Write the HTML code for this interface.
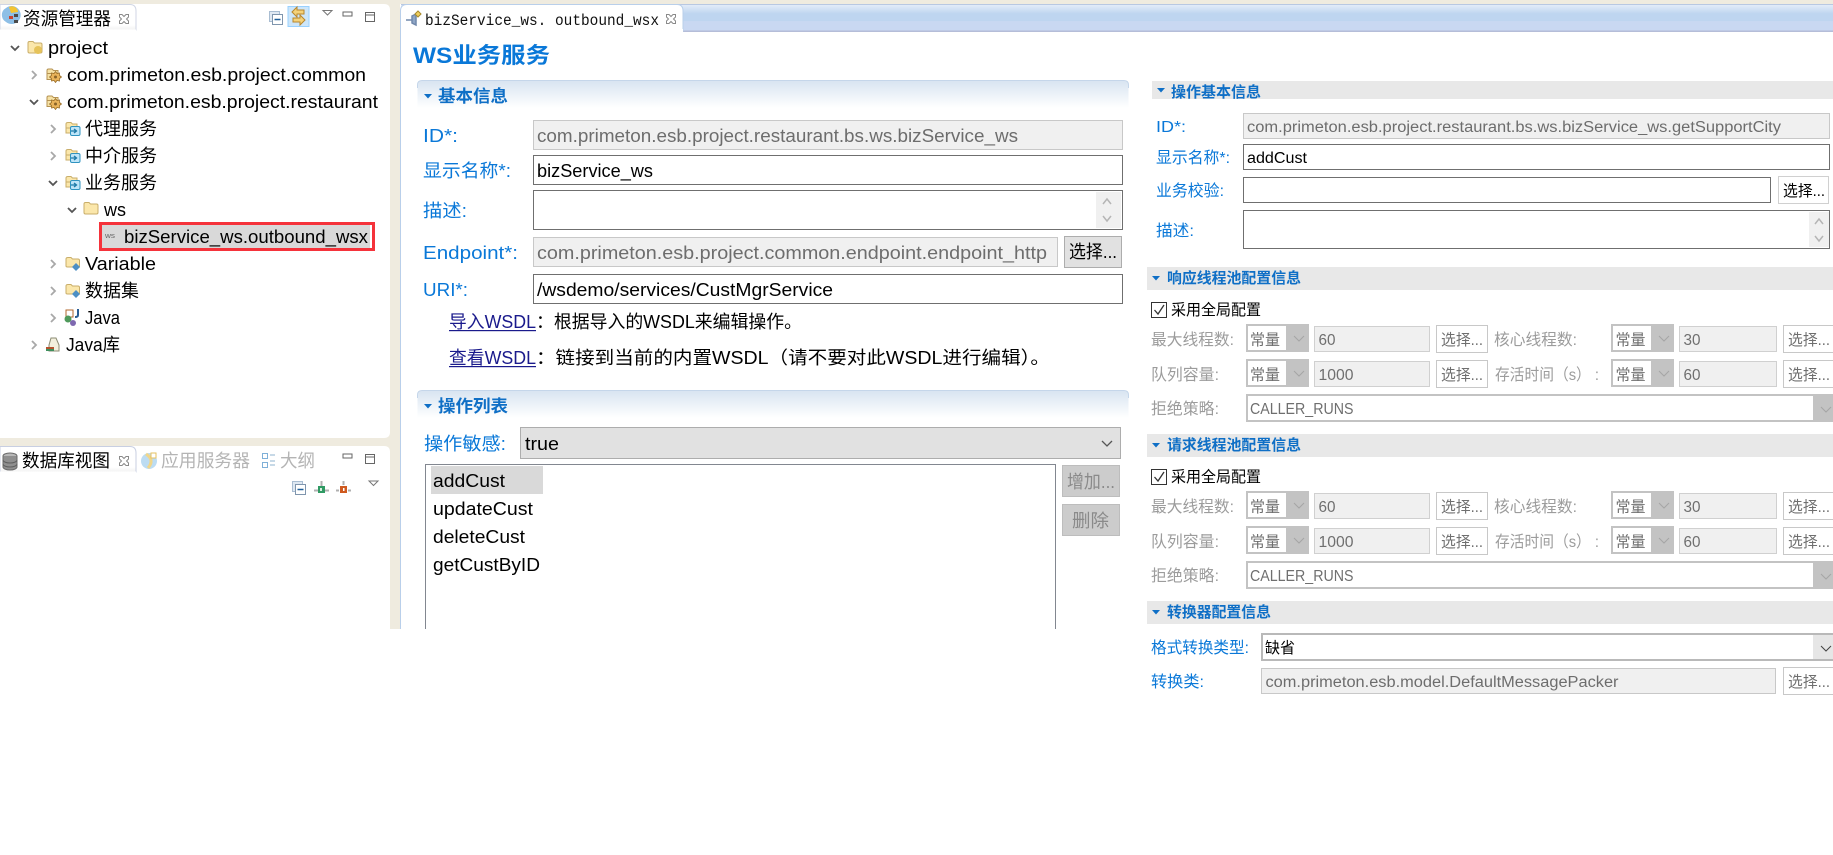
<!DOCTYPE html>
<html lang="zh">
<head>
<meta charset="utf-8">
<title>WS业务服务</title>
<style>
html,body{margin:0;padding:0;background:#fff;width:1833px;height:855px;overflow:hidden}
svg{display:block}
text{font-family:"Liberation Sans","Noto Sans CJK SC",sans-serif;white-space:pre}
.t{font-size:18px;fill:#000}
.l{font-size:18px;fill:#0a78d8}
.v{font-size:18px;fill:#6d6d6d}
.k{font-size:18px;fill:#000}
.s{font-size:17px;font-weight:700;fill:#0f6fc6}
.rs{font-size:15px;font-weight:700;fill:#0f6fc6}
.rl{font-size:16px;fill:#0a78d8}
.rv{font-size:15.5px;fill:#6d6d6d}
.rk{font-size:15.5px;fill:#000}
.g{font-size:16px;fill:#9c9c9c}
.gv{font-size:15.5px;fill:#6f6f6f}
</style>
</head>
<body>
<svg xmlns="http://www.w3.org/2000/svg" width="1833" height="855" viewBox="0 0 1833 855">
<defs>
<linearGradient id="tabg" x1="0" y1="0" x2="0" y2="1"><stop offset="0" stop-color="#ffffff"/><stop offset=".8" stop-color="#ffffff"/><stop offset="1" stop-color="#f2f2f2"/></linearGradient>
<linearGradient id="sec" x1="0" y1="0" x2="0" y2="1"><stop offset="0" stop-color="#d8e4f1"/><stop offset="1" stop-color="#ffffff"/></linearGradient>
<linearGradient id="strip" x1="0" y1="0" x2="0" y2="1"><stop offset="0" stop-color="#e6eefa"/><stop offset=".35" stop-color="#bed5f0"/><stop offset=".6" stop-color="#bed5f0"/><stop offset=".62" stop-color="#c9d8f2"/><stop offset="1" stop-color="#c9d8f2"/></linearGradient>
<symbol id="folder" viewBox="0 0 16 14" width="16" height="14"><path d="M1 3 Q1 1.5 2.5 1.5 H6 L7.5 3 H13.5 Q15 3 15 4.5 V11.5 Q15 13 13.5 13 H2.5 Q1 13 1 11.5 Z" fill="#fbe7ab" stroke="#c9ae6a"/></symbol>
<symbol id="xclose" viewBox="0 0 12 12" width="12" height="12"><path d="M1.5 1.5 H4 L6 3.5 L8 1.5 H10.5 V4 L8.5 6 L10.5 8 V10.5 H8 L6 8.5 L4 10.5 H1.5 V8 L3.5 6 L1.5 4 Z" fill="#fff" stroke="#8a8a8a"/></symbol>
<symbol id="gear" viewBox="0 0 16 16" width="16" height="16"><path d="M1 3.5 Q1 2 2.500 2 H6 L7.500 3.500 H12 V7 H1 Z" fill="#f6e2a6" stroke="#b59252"/><path d="M1 6.500 H8 V12.500 H1 Z" fill="#f6e2a6" stroke="#b59252"/><path d="M9.500 4.500 L11 6.500 L13.500 6 L13.500 8.500 L15.500 10 L13.500 11.500 L13.500 14 L11 13.500 L9.500 15.500 L8 13.500 L5.500 14 L5.500 11.500 L3.500 10 L5.500 8.500 L5.500 6 L8 6.500 Z" fill="#e9b35a" stroke="#9a6f2a" stroke-width=".8"/><circle cx="9.500" cy="10" r="1.500" fill="#8a6428"/></symbol>
<symbol id="sf1" viewBox="0 0 16 16" width="16" height="16"><path d="M1 3 Q1 1.5 3 1.5 H6 L7.5 3 H12 V7 H1 Z M1 7 V12 H6 V7" fill="#fbe7ab" stroke="#c9ae6a"/><rect x="5.5" y="5.5" width="9.5" height="9" rx="1.5" fill="#bfe5f8" stroke="#2f93c0"/><path d="M6 10 H11 M9 8 L11.5 10 L9 12" fill="none" stroke="#1e7aa8" stroke-width="1.3"/></symbol>
<symbol id="vf" viewBox="0 0 16 16" width="16" height="16"><path d="M1 3 Q1 1.5 3 1.5 H6 L7.5 3 H13 Q14.5 3 14.5 4.5 V11 H2.5 Q1 11 1 10 Z" fill="#fbe7ab" stroke="#c9ae6a"/><path d="M11 7 L15 11 L11 15 L7 11 Z" fill="#4d8fc4"/></symbol>
<symbol id="chev-d" viewBox="0 0 10 10" width="10" height="10"><path d="M1 3 L5 7 L9 3" fill="none" stroke="#555" stroke-width="1.8"/></symbol>
<symbol id="chev-r" viewBox="0 0 10 10" width="10" height="10"><path d="M3 1 L7 5 L3 9" fill="none" stroke="#a8a8a8" stroke-width="1.8"/></symbol>
<symbol id="collapse" viewBox="0 0 14 14" width="14" height="14"><rect x=".5" y=".5" width="10" height="10" fill="#dfe8f2" stroke="#a9bdd2"/><rect x="3.5" y="3.5" width="10" height="10" fill="#fff" stroke="#7f95ad"/><path d="M5.5 8.5 H11.5" stroke="#1f5f9a" stroke-width="1.5"/></symbol>
</defs>

<!-- page chrome -->
<rect x="0" y="0" width="1833" height="629" fill="#efebdf"/>
<rect x="0" y="629" width="1833" height="226" fill="#fff"/>

<!-- left upper panel -->
<path d="M0 4 H384 Q390 4 390 10 V432 Q390 438 384 438 H0 Z" fill="#fff"/>
<path d="M0 4.5 H130 Q136 4.5 136 11 V30 H0 Z" fill="url(#tabg)" stroke="#d0d6e4"/>
<path d="M0 30 H136" stroke="#fff"/>
<path d="M6 8 a9 9 0 1 1 0 14 a8 8 0 0 1 0 -14Z" fill="#8ebfe6"/><path d="M9 7 a6 6 0 0 1 9 5 l-7 1 Z" fill="#f4c430"/><rect x="9" y="16" width="4" height="3" fill="#c9452f"/><rect x="14" y="14" width="4" height="3" fill="#4a4a4a"/><rect x="14" y="20" width="4" height="3" fill="#4a4a4a"/>
<text class="t" x="23" y="25" textLength="88" lengthAdjust="spacingAndGlyphs">资源管理器</text>
<use href="#xclose" x="118" y="13"/>
<use href="#collapse" x="269" y="11"/>
<rect x="288" y="6.5" width="21" height="20" fill="#cde6fa" stroke="#99d1ff"/>
<path d="M292 13 L297 8 V11 H304 V15 H297 V18 Z M305 21 L300 26 V23 H293 V19 H300 V16 Z" fill="#f4d27a" stroke="#b8862e" transform="translate(0,-1)"/>
<path d="M323 10.5 H332 L327.5 15 Z" fill="#fff" stroke="#777"/>
<rect x="343" y="12" width="9" height="4" fill="#fff" stroke="#666"/>
<rect x="365.500" y="12.500" width="9" height="9" fill="#fff" stroke="#666"/><path d="M365 15 H375" stroke="#666"/>

<!-- tree -->
<use href="#chev-d" x="10" y="43"/>
<use href="#folder" x="27" y="40"/><circle cx="38" cy="50" r="4" fill="#e6c35a"/>
<text class="t" x="48" y="54" textLength="60" lengthAdjust="spacingAndGlyphs">project</text>
<use href="#chev-r" x="29" y="70"/><use href="#gear" x="46" y="67"/>
<text class="t" x="67" y="81" textLength="299" lengthAdjust="spacingAndGlyphs">com.primeton.esb.project.common</text>
<use href="#chev-d" x="29" y="97"/><use href="#gear" x="46" y="94"/>
<text class="t" x="67" y="108" textLength="311" lengthAdjust="spacingAndGlyphs">com.primeton.esb.project.restaurant</text>
<use href="#chev-r" x="48" y="124"/><use href="#sf1" x="65" y="121"/>
<text class="t" x="85" y="135" textLength="72" lengthAdjust="spacingAndGlyphs">代理服务</text>
<use href="#chev-r" x="48" y="151"/><use href="#sf1" x="65" y="148"/>
<text class="t" x="85" y="162" textLength="72" lengthAdjust="spacingAndGlyphs">中介服务</text>
<use href="#chev-d" x="48" y="178"/><use href="#sf1" x="65" y="175"/>
<text class="t" x="85" y="189" textLength="72" lengthAdjust="spacingAndGlyphs">业务服务</text>
<use href="#chev-d" x="67" y="205"/><use href="#folder" x="83" y="201"/>
<text class="t" x="104" y="216" textLength="22" lengthAdjust="spacingAndGlyphs">ws</text>
<rect x="101" y="225" width="269" height="23" fill="#d9d9d9"/>
<rect x="100.500" y="223.500" width="273" height="26" fill="none" stroke="#f5333b" stroke-width="3"/>
<text x="105" y="238" style="font-size:7px;fill:#666" textLength="10" lengthAdjust="spacingAndGlyphs">ws</text>
<text class="t" x="124" y="243" textLength="244" lengthAdjust="spacingAndGlyphs">bizService_ws.outbound_wsx</text>
<use href="#chev-r" x="48" y="259"/><use href="#vf" x="65" y="256"/>
<text class="t" x="85" y="270" textLength="71" lengthAdjust="spacingAndGlyphs">Variable</text>
<use href="#chev-r" x="48" y="286"/><use href="#vf" x="65" y="283"/>
<text class="t" x="85" y="297" textLength="54" lengthAdjust="spacingAndGlyphs">数据集</text>
<use href="#chev-r" x="48" y="313"/>
<rect x="66" y="310" width="7" height="7" fill="none" stroke="#b0672e"/><circle cx="68" cy="319" r="3.500" fill="#4f9a5b"/><circle cx="73" cy="323" r="3" fill="#7e68b0"/><path d="M78 309 V315 Q78 317 75 317" fill="none" stroke="#2a5d93" stroke-width="2"/>
<text class="t" x="85" y="324" textLength="35" lengthAdjust="spacingAndGlyphs">Java</text>
<use href="#chev-r" x="29" y="340"/>
<path d="M49 345 L51 338 H56 L59 345 V351 H49 Z" fill="#f3f0de" stroke="#8b8b73"/><rect x="46" y="347" width="8" height="4" fill="#b5522e"/><rect x="46" y="349" width="8" height="2" fill="#3f8f5d"/>
<text class="t" x="66" y="351" textLength="54" lengthAdjust="spacingAndGlyphs">Java库</text>

<!-- left lower panel -->
<path d="M0 446 H384 Q390 446 390 452 V629 H0 Z" fill="#fff"/>
<path d="M0 446.500 H130 Q136 446.500 136 453 V472 H0 Z" fill="url(#tabg)" stroke="#c8cfe2"/>
<path d="M0 472 H136" stroke="#fff"/>
<ellipse cx="10" cy="456" rx="7" ry="3" fill="#b8b8b8" stroke="#6b6b6b"/><path d="M3 456 V467 a7 3 0 0 0 14 0 V456" fill="#8f8f8f" stroke="#6b6b6b"/><path d="M3 460 a7 3 0 0 0 14 0 M3 464 a7 3 0 0 0 14 0" fill="none" stroke="#5f5f5f"/>
<text class="t" x="22" y="467" textLength="88" lengthAdjust="spacingAndGlyphs">数据库视图</text>
<use href="#xclose" x="118" y="455"/>
<circle cx="149" cy="461" r="8" fill="#bcdcf2"/><path d="M146 454 Q155 460 148 468" fill="none" stroke="#f0d68a" stroke-width="3"/><rect x="151" y="453" width="5" height="5" fill="#fff" stroke="#e5c062"/>
<text class="t" style="fill:#b4b4b4" x="161" y="467" textLength="89" lengthAdjust="spacingAndGlyphs">应用服务器</text>
<rect x="262.500" y="453.500" width="5" height="5" fill="#fff" stroke="#7fb0d8"/><rect x="262.500" y="462.500" width="5" height="5" fill="#fff" stroke="#7fb0d8"/><path d="M270 455 H275 M270 461 H275 M270 465 H275" stroke="#8fb3cf"/>
<text class="t" style="fill:#b4b4b4" x="280" y="467" textLength="35" lengthAdjust="spacingAndGlyphs">大纲</text>
<rect x="343" y="454" width="9" height="4" fill="#fff" stroke="#666"/>
<rect x="365.500" y="454.500" width="9" height="9" fill="#fff" stroke="#666"/><path d="M365 457 H375" stroke="#666"/>
<use href="#collapse" x="292" y="481"/>
<path d="M314 490.500 H329 M321.500 481 V486" stroke="#b0b0b0" stroke-width="2"/><rect x="318" y="486" width="7" height="7" fill="#2f9a63"/><rect x="320" y="488" width="2" height="3" fill="#d8f0e0"/>
<path d="M336 490.500 H339 M348 490.500 H351 M343.500 481 V485" stroke="#b0b0b0" stroke-width="2"/><rect x="340" y="486" width="7" height="7" fill="#cf5a1f"/><rect x="343" y="488" width="1.500" height="3" fill="#fff"/>
<path d="M369 481 H378 L373.500 485.500 Z" fill="#fff" stroke="#777"/>

<!-- editor -->
<rect x="400" y="4" width="1433" height="625" fill="#fff"/>
<rect x="401" y="4" width="1432" height="28" fill="url(#strip)"/>
<rect x="401" y="4" width="1432" height="1" fill="#b8c8e2"/>
<rect x="401" y="30.500" width="1432" height="1.500" fill="#b5bdd8"/>
<path d="M400.500 32 V11 Q400.500 4.500 407 4.500 H677 Q683 4.500 683 11 V31.500" fill="#fff" stroke="#b9cfea"/>
<rect x="401" y="29" width="282" height="4" fill="#fff"/>
<rect x="400" y="28" width="1" height="601" fill="#b9cfea"/>
<path d="M406 20 H412 M412 16 L416 14 V25 L412 23 Z" fill="#8fa6c6" stroke="#7188ab" stroke-width="1.500"/><path d="M418 11 l3 3 l-3 3 l-3 -3 Z" fill="#f0d060" stroke="#a88a2a"/>
<text x="425" y="25" style="font-family:'Liberation Mono','Noto Sans CJK SC',monospace;font-size:15.5px;fill:#111" textLength="234" lengthAdjust="spacingAndGlyphs">bizService_ws. outbound_wsx</text>
<use href="#xclose" x="665" y="13"/>
<text x="413" y="63" style="font-size:22px;font-weight:700;fill:#0a78d8" textLength="137" lengthAdjust="spacingAndGlyphs">WS业务服务</text>

<!-- section 1 -->
<path d="M417.500 108 V85 Q417.500 80.500 422 80.500 H1124 Q1128.500 80.500 1128.500 85 V108 Z" fill="url(#sec)" stroke="none"/>
<path d="M417.500 88 V85 Q417.500 80.500 422 80.500 H1124 Q1128.500 80.500 1128.500 85 V88" fill="none" stroke="#c5d6ea"/>
<path d="M424 94 H432 L428 98.500 Z" fill="#0f6fc6"/>
<text class="s" x="438" y="102" textLength="70" lengthAdjust="spacingAndGlyphs">基本信息</text>

<text class="l" x="423" y="142" textLength="35" lengthAdjust="spacingAndGlyphs">ID*:</text>
<rect x="533.500" y="120.500" width="589" height="29" fill="#f0f0f0" stroke="#c8c8c8"/>
<text class="v" x="537" y="142" textLength="481" lengthAdjust="spacingAndGlyphs">com.primeton.esb.project.restaurant.bs.ws.bizService_ws</text>

<text class="l" x="423" y="177" textLength="88" lengthAdjust="spacingAndGlyphs">显示名称*:</text>
<rect x="533.500" y="155.500" width="589" height="29" fill="#fff" stroke="#6f6f6f"/>
<text class="k" x="537" y="177" textLength="116" lengthAdjust="spacingAndGlyphs">bizService_ws</text>

<text class="l" x="423" y="217" textLength="44" lengthAdjust="spacingAndGlyphs">描述:</text>
<rect x="533.500" y="190.500" width="589" height="39" fill="#fff" stroke="#6f6f6f"/>
<rect x="1096" y="192" width="25" height="36" fill="#f0f0f0"/>
<path d="M1103 204 L1107 199 L1111 204 M1103 216 L1107 221 L1111 216" fill="none" stroke="#b5b5b5" stroke-width="1.500"/>

<text class="l" x="423" y="259" textLength="95" lengthAdjust="spacingAndGlyphs">Endpoint*:</text>
<rect x="533.500" y="237.500" width="524" height="29" fill="#f0f0f0" stroke="#c8c8c8"/>
<text class="v" x="537" y="259" textLength="510" lengthAdjust="spacingAndGlyphs">com.primeton.esb.project.common.endpoint.endpoint_http</text>
<rect x="1064.500" y="236.500" width="57" height="31" fill="#e1e1e1" stroke="#adadad"/>
<text class="k" x="1069" y="258" textLength="48" lengthAdjust="spacingAndGlyphs">选择...</text>

<text class="l" x="423" y="296" textLength="45" lengthAdjust="spacingAndGlyphs">URI*:</text>
<rect x="533.500" y="274.500" width="589" height="29" fill="#fff" stroke="#6f6f6f"/>
<text class="k" x="537" y="296" textLength="296" lengthAdjust="spacingAndGlyphs">/wsdemo/services/CustMgrService</text>

<text class="k" style="fill:#1a1a8c" x="449" y="328" textLength="87" lengthAdjust="spacingAndGlyphs">导入WSDL</text>
<rect x="449" y="330" width="87" height="1.200" fill="#1a1a8c"/>
<text class="k" x="536" y="328" textLength="266" lengthAdjust="spacingAndGlyphs">：根据导入的WSDL来编辑操作。</text>
<text class="k" style="fill:#1a1a8c" x="449" y="364" textLength="87" lengthAdjust="spacingAndGlyphs">查看WSDL</text>
<rect x="449" y="366" width="87" height="1.200" fill="#1a1a8c"/>
<text class="k" x="536" y="364" textLength="514" lengthAdjust="spacingAndGlyphs">：链接到当前的内置WSDL（请不要对此WSDL进行编辑）。</text>

<!-- section 2 -->
<path d="M417.500 418 V395 Q417.500 390.500 422 390.500 H1124 Q1128.500 390.500 1128.500 395 V418 Z" fill="url(#sec)"/>
<path d="M417.500 398 V395 Q417.500 390.500 422 390.500 H1124 Q1128.500 390.500 1128.500 395 V398" fill="none" stroke="#c5d6ea"/>
<path d="M424 404 H432 L428 408.500 Z" fill="#0f6fc6"/>
<text class="s" x="438" y="412" textLength="70" lengthAdjust="spacingAndGlyphs">操作列表</text>

<text class="l" x="424" y="450" textLength="82" lengthAdjust="spacingAndGlyphs">操作敏感:</text>
<rect x="520.500" y="427.500" width="600" height="31" fill="#e1e1e1" stroke="#adadad"/>
<text class="k" x="525" y="450" textLength="34" lengthAdjust="spacingAndGlyphs">true</text>
<path d="M1102 441 L1107 446 L1112 441" fill="none" stroke="#555" stroke-width="1.300"/>

<path d="M425.500 629 V464.500 H1055.500 V629" fill="#fff" stroke="#828790"/>
<rect x="431" y="466" width="112" height="28" fill="#d9d9d9"/>
<text class="k" x="433" y="487" textLength="72" lengthAdjust="spacingAndGlyphs">addCust</text>
<text class="k" x="433" y="515" textLength="100" lengthAdjust="spacingAndGlyphs">updateCust</text>
<text class="k" x="433" y="543" textLength="92" lengthAdjust="spacingAndGlyphs">deleteCust</text>
<text class="k" x="433" y="571" textLength="107" lengthAdjust="spacingAndGlyphs">getCustByID</text>

<rect x="1062.500" y="465.500" width="57" height="31" fill="#cccccc" stroke="#bdbdbd"/>
<text class="k" style="fill:#8a8a8a" x="1067" y="488" textLength="48" lengthAdjust="spacingAndGlyphs">增加...</text>
<rect x="1062.500" y="504.500" width="57" height="31" fill="#cccccc" stroke="#bdbdbd"/>
<text class="k" style="fill:#8a8a8a" x="1072" y="527" textLength="37" lengthAdjust="spacingAndGlyphs">删除</text>

<!-- right: 操作基本信息 -->
<rect x="1152" y="81" width="681" height="18" fill="#e8e8e8"/>
<path d="M1157 88 H1165 L1161 92.500 Z" fill="#0f6fc6"/>
<text class="rs" x="1171" y="97" textLength="90" lengthAdjust="spacingAndGlyphs">操作基本信息</text>

<text class="rl" x="1156" y="132" textLength="30" lengthAdjust="spacingAndGlyphs">ID*:</text>
<rect x="1243.500" y="113.500" width="586" height="25" fill="#f0f0f0" stroke="#c8c8c8"/>
<text class="rv" x="1247" y="132" textLength="534" lengthAdjust="spacingAndGlyphs">com.primeton.esb.project.restaurant.bs.ws.bizService_ws.getSupportCity</text>

<text class="rl" x="1156" y="163" textLength="74" lengthAdjust="spacingAndGlyphs">显示名称*:</text>
<rect x="1243.500" y="144.500" width="586" height="25" fill="#fff" stroke="#6f6f6f"/>
<text class="rk" x="1247" y="163" textLength="60" lengthAdjust="spacingAndGlyphs">addCust</text>

<text class="rl" x="1156" y="196" textLength="68" lengthAdjust="spacingAndGlyphs">业务校验:</text>
<rect x="1243.500" y="177.500" width="527" height="25" fill="#fff" stroke="#6f6f6f"/>
<rect x="1778.500" y="176.500" width="50" height="27" fill="#fff" stroke="#d0d0d0"/>
<text class="rk" x="1783" y="196" textLength="42" lengthAdjust="spacingAndGlyphs">选择...</text>

<text class="rl" x="1156" y="236" textLength="38" lengthAdjust="spacingAndGlyphs">描述:</text>
<rect x="1243.500" y="210.500" width="586" height="38" fill="#fff" stroke="#6f6f6f"/>
<rect x="1809" y="212" width="20" height="35" fill="#f0f0f0"/>
<path d="M1815 224 L1819 219 L1823 224 M1815 236 L1819 241 L1823 236" fill="none" stroke="#b5b5b5" stroke-width="1.500"/>

<!-- right: 响应线程池配置信息 -->
<g>
<rect x="1147" y="267" width="686" height="23" fill="#e8e8e8"/>
<path d="M1152 276 H1160 L1156 280.500 Z" fill="#0f6fc6"/>
<text class="rs" x="1167" y="283" textLength="134" lengthAdjust="spacingAndGlyphs">响应线程池配置信息</text>
<rect x="1151.500" y="302.500" width="15" height="15" fill="#fff" stroke="#333"/>
<path d="M1154.500 310 L1158 314 L1164 305" fill="none" stroke="#333" stroke-width="1.300"/>
<text class="rk" x="1171" y="315" textLength="90" lengthAdjust="spacingAndGlyphs">采用全局配置</text>

<text class="g" x="1151" y="345" textLength="83" lengthAdjust="spacingAndGlyphs">最大线程数:</text>
<rect x="1246" y="324" width="63" height="28" fill="#c3c3c3"/><rect x="1248" y="326" width="38" height="24" fill="#fff"/>
<path d="M1294 336 L1299 341 L1304 336" fill="none" stroke="#a5a5a5"/>
<text class="gv" x="1250" y="345" textLength="30" lengthAdjust="spacingAndGlyphs">常量</text>
<rect x="1314.500" y="326.500" width="115" height="25" fill="#f0f0f0" stroke="#d0d0d0"/>
<text class="gv" x="1318.500" y="345" textLength="17" lengthAdjust="spacingAndGlyphs">60</text>
<rect x="1436.500" y="325.500" width="51" height="27" fill="#fff" stroke="#c8c8c8"/>
<text class="gv" x="1441" y="345" textLength="42" lengthAdjust="spacingAndGlyphs">选择...</text>
<text class="g" x="1494" y="345" textLength="83" lengthAdjust="spacingAndGlyphs">核心线程数:</text>
<rect x="1611" y="324" width="63" height="28" fill="#c3c3c3"/><rect x="1613" y="326" width="38" height="24" fill="#fff"/>
<path d="M1659 336 L1664 341 L1669 336" fill="none" stroke="#a5a5a5"/>
<text class="gv" x="1615.500" y="345" textLength="30" lengthAdjust="spacingAndGlyphs">常量</text>
<rect x="1679.500" y="326.500" width="97" height="25" fill="#f0f0f0" stroke="#d0d0d0"/>
<text class="gv" x="1683.500" y="345" textLength="17" lengthAdjust="spacingAndGlyphs">30</text>
<rect x="1783.500" y="325.500" width="51" height="27" fill="#fff" stroke="#c8c8c8"/>
<text class="gv" x="1788" y="345" textLength="42" lengthAdjust="spacingAndGlyphs">选择...</text>

<text class="g" x="1151" y="380" textLength="68" lengthAdjust="spacingAndGlyphs">队列容量:</text>
<rect x="1246" y="359" width="63" height="28" fill="#c3c3c3"/><rect x="1248" y="361" width="38" height="24" fill="#fff"/>
<path d="M1294 371 L1299 376 L1304 371" fill="none" stroke="#a5a5a5"/>
<text class="gv" x="1250" y="380" textLength="30" lengthAdjust="spacingAndGlyphs">常量</text>
<rect x="1314.500" y="361.500" width="115" height="25" fill="#f0f0f0" stroke="#d0d0d0"/>
<text class="gv" x="1318.500" y="380" textLength="35" lengthAdjust="spacingAndGlyphs">1000</text>
<rect x="1436.500" y="360.500" width="51" height="27" fill="#fff" stroke="#c8c8c8"/>
<text class="gv" x="1441" y="380" textLength="42" lengthAdjust="spacingAndGlyphs">选择...</text>
<text class="g" x="1495" y="380" textLength="104" lengthAdjust="spacingAndGlyphs">存活时间（s） :</text>
<rect x="1611" y="359" width="63" height="28" fill="#c3c3c3"/><rect x="1613" y="361" width="38" height="24" fill="#fff"/>
<path d="M1659 371 L1664 376 L1669 371" fill="none" stroke="#a5a5a5"/>
<text class="gv" x="1615.500" y="380" textLength="30" lengthAdjust="spacingAndGlyphs">常量</text>
<rect x="1679.500" y="361.500" width="97" height="25" fill="#f0f0f0" stroke="#d0d0d0"/>
<text class="gv" x="1683.500" y="380" textLength="17" lengthAdjust="spacingAndGlyphs">60</text>
<rect x="1783.500" y="360.500" width="51" height="27" fill="#fff" stroke="#c8c8c8"/>
<text class="gv" x="1788" y="380" textLength="42" lengthAdjust="spacingAndGlyphs">选择...</text>

<text class="g" x="1151" y="414" textLength="68" lengthAdjust="spacingAndGlyphs">拒绝策略:</text>
<rect x="1246" y="394" width="587" height="28" fill="#c3c3c3"/><rect x="1248" y="396" width="565" height="24" fill="#fff"/>
<path d="M1821 407 L1826 412 L1831 407" fill="none" stroke="#a5a5a5"/>
<text class="gv" x="1250" y="414" textLength="103.500" lengthAdjust="spacingAndGlyphs">CALLER_RUNS</text>
</g>

<!-- right: 请求线程池配置信息 -->
<g transform="translate(0,167)">
<rect x="1147" y="267" width="686" height="23" fill="#e8e8e8"/>
<path d="M1152 276 H1160 L1156 280.500 Z" fill="#0f6fc6"/>
<text class="rs" x="1167" y="283" textLength="134" lengthAdjust="spacingAndGlyphs">请求线程池配置信息</text>
<rect x="1151.500" y="302.500" width="15" height="15" fill="#fff" stroke="#333"/>
<path d="M1154.500 310 L1158 314 L1164 305" fill="none" stroke="#333" stroke-width="1.300"/>
<text class="rk" x="1171" y="315" textLength="90" lengthAdjust="spacingAndGlyphs">采用全局配置</text>

<text class="g" x="1151" y="345" textLength="83" lengthAdjust="spacingAndGlyphs">最大线程数:</text>
<rect x="1246" y="324" width="63" height="28" fill="#c3c3c3"/><rect x="1248" y="326" width="38" height="24" fill="#fff"/>
<path d="M1294 336 L1299 341 L1304 336" fill="none" stroke="#a5a5a5"/>
<text class="gv" x="1250" y="345" textLength="30" lengthAdjust="spacingAndGlyphs">常量</text>
<rect x="1314.500" y="326.500" width="115" height="25" fill="#f0f0f0" stroke="#d0d0d0"/>
<text class="gv" x="1318.500" y="345" textLength="17" lengthAdjust="spacingAndGlyphs">60</text>
<rect x="1436.500" y="325.500" width="51" height="27" fill="#fff" stroke="#c8c8c8"/>
<text class="gv" x="1441" y="345" textLength="42" lengthAdjust="spacingAndGlyphs">选择...</text>
<text class="g" x="1494" y="345" textLength="83" lengthAdjust="spacingAndGlyphs">核心线程数:</text>
<rect x="1611" y="324" width="63" height="28" fill="#c3c3c3"/><rect x="1613" y="326" width="38" height="24" fill="#fff"/>
<path d="M1659 336 L1664 341 L1669 336" fill="none" stroke="#a5a5a5"/>
<text class="gv" x="1615.500" y="345" textLength="30" lengthAdjust="spacingAndGlyphs">常量</text>
<rect x="1679.500" y="326.500" width="97" height="25" fill="#f0f0f0" stroke="#d0d0d0"/>
<text class="gv" x="1683.500" y="345" textLength="17" lengthAdjust="spacingAndGlyphs">30</text>
<rect x="1783.500" y="325.500" width="51" height="27" fill="#fff" stroke="#c8c8c8"/>
<text class="gv" x="1788" y="345" textLength="42" lengthAdjust="spacingAndGlyphs">选择...</text>

<text class="g" x="1151" y="380" textLength="68" lengthAdjust="spacingAndGlyphs">队列容量:</text>
<rect x="1246" y="359" width="63" height="28" fill="#c3c3c3"/><rect x="1248" y="361" width="38" height="24" fill="#fff"/>
<path d="M1294 371 L1299 376 L1304 371" fill="none" stroke="#a5a5a5"/>
<text class="gv" x="1250" y="380" textLength="30" lengthAdjust="spacingAndGlyphs">常量</text>
<rect x="1314.500" y="361.500" width="115" height="25" fill="#f0f0f0" stroke="#d0d0d0"/>
<text class="gv" x="1318.500" y="380" textLength="35" lengthAdjust="spacingAndGlyphs">1000</text>
<rect x="1436.500" y="360.500" width="51" height="27" fill="#fff" stroke="#c8c8c8"/>
<text class="gv" x="1441" y="380" textLength="42" lengthAdjust="spacingAndGlyphs">选择...</text>
<text class="g" x="1495" y="380" textLength="104" lengthAdjust="spacingAndGlyphs">存活时间（s） :</text>
<rect x="1611" y="359" width="63" height="28" fill="#c3c3c3"/><rect x="1613" y="361" width="38" height="24" fill="#fff"/>
<path d="M1659 371 L1664 376 L1669 371" fill="none" stroke="#a5a5a5"/>
<text class="gv" x="1615.500" y="380" textLength="30" lengthAdjust="spacingAndGlyphs">常量</text>
<rect x="1679.500" y="361.500" width="97" height="25" fill="#f0f0f0" stroke="#d0d0d0"/>
<text class="gv" x="1683.500" y="380" textLength="17" lengthAdjust="spacingAndGlyphs">60</text>
<rect x="1783.500" y="360.500" width="51" height="27" fill="#fff" stroke="#c8c8c8"/>
<text class="gv" x="1788" y="380" textLength="42" lengthAdjust="spacingAndGlyphs">选择...</text>

<text class="g" x="1151" y="414" textLength="68" lengthAdjust="spacingAndGlyphs">拒绝策略:</text>
<rect x="1246" y="394" width="587" height="28" fill="#c3c3c3"/><rect x="1248" y="396" width="565" height="24" fill="#fff"/>
<path d="M1821 407 L1826 412 L1831 407" fill="none" stroke="#a5a5a5"/>
<text class="gv" x="1250" y="414" textLength="103.500" lengthAdjust="spacingAndGlyphs">CALLER_RUNS</text>
</g>

<!-- right: 转换器配置信息 -->
<rect x="1147" y="601" width="686" height="23" fill="#e8e8e8"/>
<path d="M1152 610 H1160 L1156 614.500 Z" fill="#0f6fc6"/>
<text class="rs" x="1167" y="617" textLength="104" lengthAdjust="spacingAndGlyphs">转换器配置信息</text>
<text class="rl" x="1151" y="653" textLength="98" lengthAdjust="spacingAndGlyphs">格式转换类型:</text>
<rect x="1261" y="633" width="572" height="28" fill="#b9b9b9"/><rect x="1263" y="635" width="550" height="24" fill="#fff"/><rect x="1813" y="635" width="20" height="24" fill="#e6e6e6"/>
<path d="M1821 646 L1826 651 L1831 646" fill="none" stroke="#444"/>
<text class="rk" x="1265" y="653" textLength="30" lengthAdjust="spacingAndGlyphs">缺省</text>
<text class="rl" x="1151" y="687" textLength="53" lengthAdjust="spacingAndGlyphs">转换类:</text>
<rect x="1261.500" y="668.500" width="514" height="25" fill="#f0f0f0" stroke="#c8c8c8"/>
<text class="rv" x="1265.500" y="687" textLength="353" lengthAdjust="spacingAndGlyphs">com.primeton.esb.model.DefaultMessagePacker</text>
<rect x="1783.500" y="667.500" width="51" height="27" fill="#fff" stroke="#c8c8c8"/>
<text class="gv" x="1788" y="687" textLength="42" lengthAdjust="spacingAndGlyphs">选择...</text>
</svg>
</body>
</html>
